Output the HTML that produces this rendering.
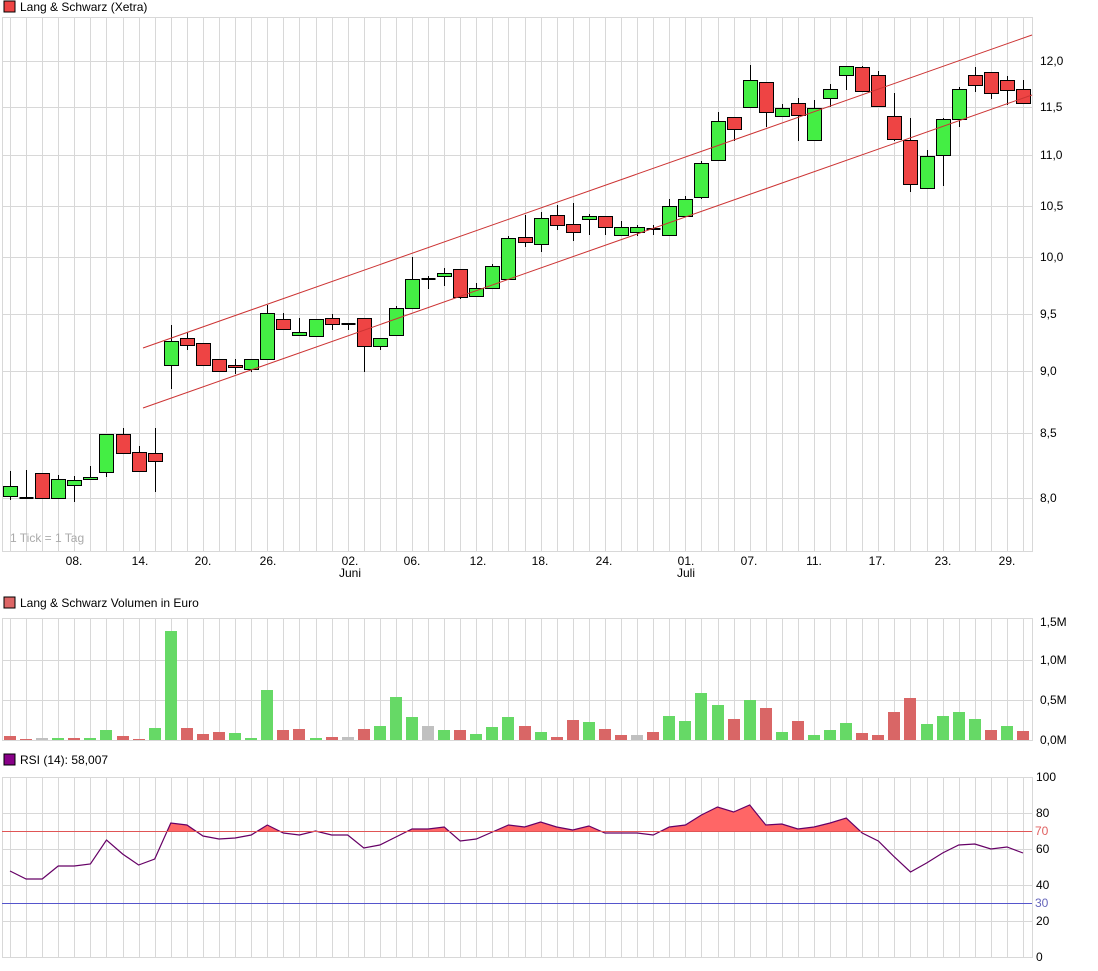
<!DOCTYPE html>
<html><head><meta charset="utf-8"><style>
body{margin:0;background:#fff;width:1098px;height:971px;overflow:hidden}
svg{display:block}
text{font-family:"Liberation Sans",sans-serif;font-size:12px;fill:#000}
</style></head><body>
<svg id="s" width="1098" height="971" xmlns="http://www.w3.org/2000/svg">
<defs><clipPath id="cl"><rect x="0" y="700" width="1098" height="131"/></clipPath></defs>
<g id="grid"></g>
<g id="shapes"></g>
<line x1="2" y1="831.5" x2="1032" y2="831.5" stroke="#e05555" stroke-width="1"/>
<line x1="2" y1="903.5" x2="1032" y2="903.5" stroke="#5555cc" stroke-width="1"/>
<rect x="4" y="1" width="11" height="11" fill="#ee4444" stroke="#000"/>
<text x="20" y="11">Lang &amp; Schwarz (Xetra)</text>
<rect x="4" y="597" width="11" height="11" fill="#dd6666" stroke="#000"/>
<text x="20" y="607">Lang &amp; Schwarz Volumen in Euro</text>
<rect x="4" y="754" width="11" height="11" fill="#880088" stroke="#000"/>
<text x="20" y="764">RSI (14): 58,007</text>
<text x="10" y="542" style="fill:#aaa">1 Tick = 1 Tag</text>
<g id="dates" text-anchor="middle">
<text x="74" y="565">08.</text><text x="140" y="565">14.</text><text x="203" y="565">20.</text><text x="268" y="565">26.</text>
<text x="350" y="565">02.</text><text x="350" y="577">Juni</text><text x="412" y="565">06.</text><text x="478" y="565">12.</text>
<text x="540" y="565">18.</text><text x="604" y="565">24.</text><text x="686" y="565">01.</text><text x="686" y="577">Juli</text>
<text x="749" y="565">07.</text><text x="814" y="565">11.</text><text x="877" y="565">17.</text><text x="943" y="565">23.</text><text x="1007" y="565">29.</text>
</g>
<g>
<text x="1040" y="65">12,0</text><text x="1040" y="111">11,5</text><text x="1040" y="159">11,0</text><text x="1040" y="210">10,5</text>
<text x="1040" y="261">10,0</text><text x="1040" y="318">9,5</text><text x="1040" y="375">9,0</text><text x="1040" y="437">8,5</text><text x="1040" y="502">8,0</text>
<text x="1040" y="626">1,5M</text><text x="1040" y="664">1,0M</text><text x="1040" y="704">0,5M</text><text x="1040" y="744">0,0M</text>
<text x="1036" y="781">100</text><text x="1036" y="817">80</text><text x="1036" y="853">60</text><text x="1036" y="889">40</text><text x="1036" y="925">20</text><text x="1036" y="961">0</text>
<text x="1035" y="835" style="fill:#e06060">70</text><text x="1035" y="907" style="fill:#6666bb">30</text>
</g>
</svg>
<script>
var NS="http://www.w3.org/2000/svg";
function el(p,t,a){var e=document.createElementNS(NS,t);for(var k in a)e.setAttribute(k,a[k]);document.getElementById(p).appendChild(e);return e;}
var X=function(i){return 10+16.08*i;};
var gc="#d8d8d8";
[[17,551],[618,740],[777,957]].forEach(function(r){
 for(var i=0;i<64;i++){var x=Math.round(X(i))+0.5;el("grid","line",{x1:x,y1:r[0],x2:x,y2:r[1],stroke:gc});}
 el("grid","rect",{x:2.5,y:r[0]+0.5,width:1030,height:r[1]-r[0],fill:"none",stroke:gc});
});
[61,107,155,206,257,314,371,433,498,660,700,813,849,885,921].forEach(function(y){el("grid","line",{x1:2,y1:y+.5,x2:1032,y2:y+.5,stroke:gc});});
var C=[[486,496,1,471,500],[497,499,2,470,499],[473,498,0,473,498],[479,498,1,475,498],[480,485,1,476,502],[477,479,1,466,480],[434,472,1,434,477],[434,453,0,428,453],[452,471,0,446,471],[453,461,0,428,492],
[341,365,1,325,389],[338,345,0,332,350],[343,365,0,343,365],[359,371,0,359,371],[365,367,0,359,374],[359,369,1,359,372],[313,359,1,305,359],[319,329,0,313,329],[332,335,1,318,335],[319,336,1,319,336],
[318,324,0,314,330],[323,324,2,323,330],[318,346,0,318,372],[338,346,1,338,350],[308,335,1,306,335],[279,308,1,257,308],[278,279,2,276,289],[273,276,1,268,286],[269,297,0,269,299],[288,296,1,283,296],
[266,288,1,264,288],[238,279,1,236,280],[237,242,0,215,247],[218,244,1,212,252],[215,225,0,205,230],[224,232,0,203,241],[216,219,1,214,235],[216,227,0,216,235],[227,235,1,221,235],[227,232,1,225,236],
[228,229,2,225,235],[206,235,1,199,235],[199,216,1,196,216],[163,197,1,161,199],[121,160,1,112,160],[117,129,0,117,141],[80,107,1,65,107],[82,112,0,82,127],[108,116,1,104,116],[103,115,0,98,141],
[108,140,1,100,140],[89,98,1,84,107],[66,75,1,66,90],[67,91,0,66,92],[75,106,0,71,106],[116,139,0,93,141],[140,184,0,118,192],[156,188,1,150,188],[119,155,1,118,186],[89,119,1,87,127],
[75,85,0,67,92],[72,93,0,72,99],[80,90,0,76,105],[89,103,0,80,103]];
C.forEach(function(c,i){var x=Math.round(X(i))+0.5;
 el("shapes","line",{x1:x,y1:c[3],x2:x,y2:c[4],stroke:"#000"});
 if(c[2]==2){el("shapes","rect",{x:x-7,y:c[0],width:14,height:2,fill:"#000"});return;}
 el("shapes","rect",{x:x-7,y:c[0]+.5,width:14,height:Math.max(1,c[1]-c[0]),fill:c[2]?"#44ee44":"#ee4444",stroke:"#000"});
});
el("shapes","line",{x1:143,y1:348,x2:1032,y2:35,stroke:"#cc3333"});
el("shapes","line",{x1:143,y1:408,x2:1032,y2:95,stroke:"#cc3333"});
var V=[[736,"r"],[739,"r"],[738,"s"],[738,"g"],[738,"r"],[738,"g"],[730,"g"],[736,"r"],[739,"r"],[728,"g"],[631,"g"],[728,"r"],[734,"r"],[732,"r"],[733,"g"],[738,"g"],[690,"g"],[730,"r"],[729,"r"],[738,"g"],
[737,"r"],[737,"s"],[729,"r"],[726,"g"],[697,"g"],[717,"g"],[726,"s"],[730,"g"],[730,"r"],[734,"g"],[727,"g"],[717,"g"],[726,"r"],[732,"g"],[737,"r"],
[720,"r"],[722,"g"],[729,"r"],[735,"r"],[735,"s"],[732,"r"],[716,"g"],[721,"g"],[693,"g"],[705,"g"],[719,"r"],[700,"g"],[708,"r"],[732,"g"],[721,"r"],[735,"g"],[730,"g"],[723,"g"],[733,"r"],[735,"r"],
[712,"r"],[698,"r"],[724,"g"],[716,"g"],[712,"g"],[719,"g"],[730,"r"],[726,"g"],[731,"r"]];
var col={g:"#66d966",r:"#d96666",s:"#c0c0c0"};
V.forEach(function(v,i){var x=Math.round(X(i));el("shapes","rect",{x:x-6,y:v[0],width:12,height:740-v[0],fill:col[v[1]]});});
var R=[871,879,879,866,866,864,840,854,865,859,823,825,836,839,838,835,825,833,835,831,835,835,848,845,837,829,829,827,841,839,832,825,827,822,827,
830,826,833,833,833,835,827,825,815,807,812,805,825,824,829,827,823,818,833,841,857,872,863,853,845,844,849,847,853];
var pts=R.map(function(y,i){return X(i).toFixed(1)+","+y;}).join(" ");
el("shapes","polygon",{points:X(0)+",831 "+pts+" "+X(63)+",831",fill:"#ff6666","clip-path":"url(#cl)"});
el("shapes","polyline",{points:pts,fill:"none",stroke:"#660066","stroke-width":1.2});
</script>
</body></html>
